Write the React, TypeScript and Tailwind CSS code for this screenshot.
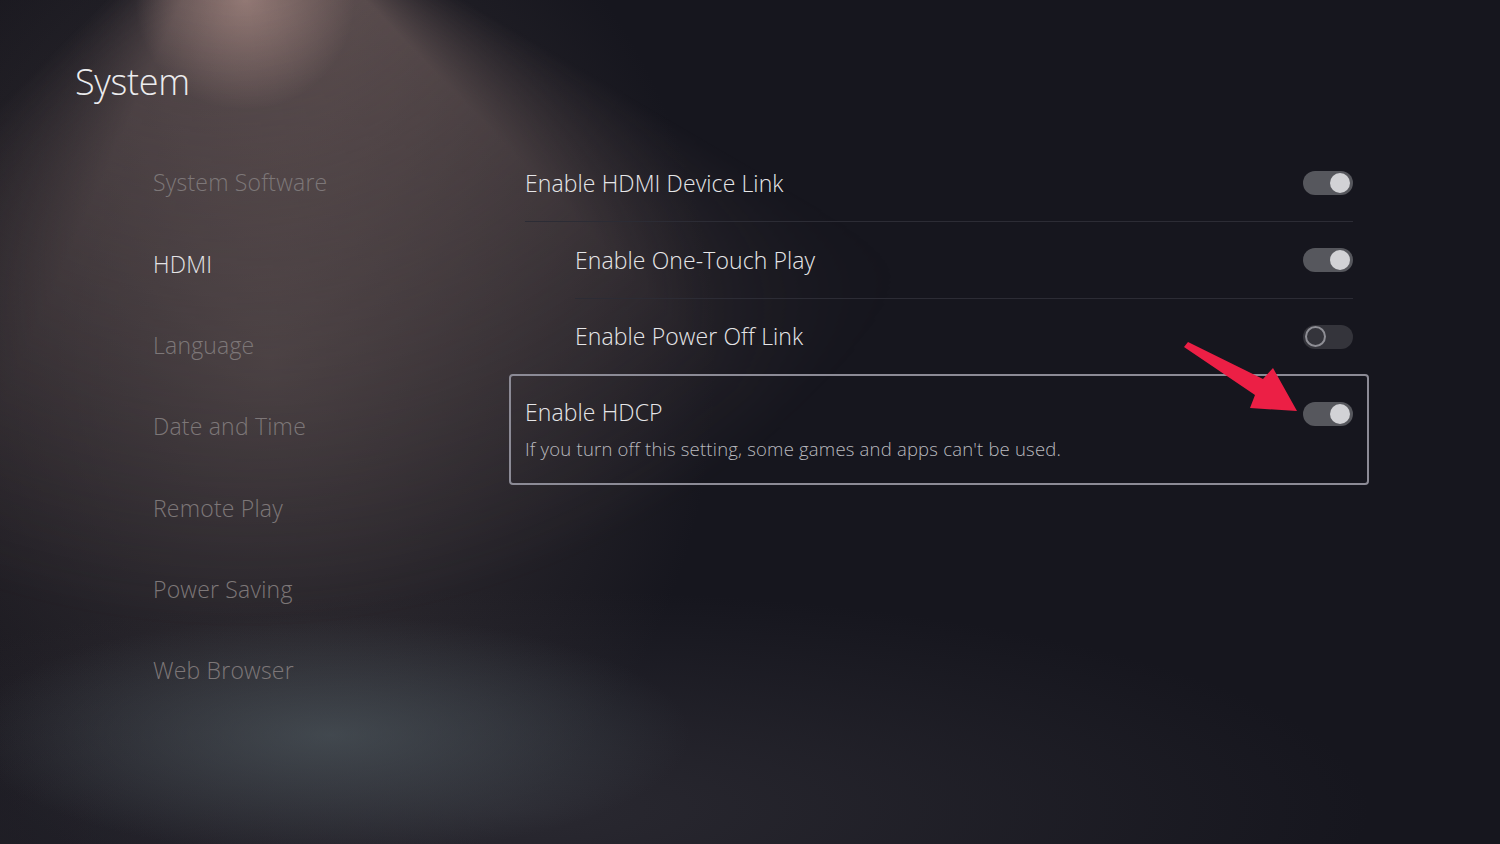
import React from "react";

const font = { fontFamily: '"Open Sans", "Noto Sans", sans-serif' };

function Toggle({ on }: { on: boolean }) {
  if (on) {
    return (
      <div className="flex h-[24px] w-[50px] shrink-0 items-center justify-end rounded-full bg-[#56575d] pr-[3px]">
        <div className="h-[20px] w-[20px] rounded-full bg-[#d2d2d6]" />
      </div>
    );
  }
  return (
    <div className="flex h-[24px] w-[50px] shrink-0 items-center justify-start rounded-full bg-[#34343b] pl-[2px]">
      <div className="h-[21px] w-[21px] rounded-full border-2 border-[#8e8e95]" />
    </div>
  );
}

const nav = [
  "System Software",
  "HDMI",
  "Language",
  "Date and Time",
  "Remote Play",
  "Power Saving",
  "Web Browser",
];

export default function App() {
  return (
    <div
      style={font}
      className="relative h-[844px] w-[1500px] overflow-hidden bg-[#16161e] bg-[radial-gradient(ellipse_110px_110px_at_245px_0px,rgba(210,170,160,0.6),transparent),radial-gradient(ellipse_360px_120px_at_330px_735px,rgba(82,94,100,0.6),transparent),radial-gradient(ellipse_850px_220px_at_520px_810px,rgba(58,56,64,0.55),transparent),radial-gradient(ellipse_620px_760px_at_270px_360px,rgba(72,64,66,0.7),transparent_72%),linear-gradient(to_right,rgba(24,23,30,0.85),transparent_9%)] text-[#e6e6e8]"
    >
      <div className="pointer-events-none absolute inset-0 bg-[conic-gradient(from_120deg_at_240px_-130px,transparent_0deg,rgba(160,132,126,0.5)_16deg,rgba(150,124,120,0.45)_84deg,transparent_106deg)] [mask-image:radial-gradient(ellipse_1000px_950px_at_240px_-130px,black_10%,transparent_80%)]" />

      <div className="relative">
        <header className="h-[142px] pl-[75px] pt-[61px]">
          <h1 className="text-[36px] font-light leading-[42px] tracking-[-0.3px] text-[#ececee]">
            System
          </h1>
        </header>

        <div className="flex">
          <nav className="w-[509px] shrink-0 pl-[153px]">
            {nav.map((item) => (
              <div
                key={item}
                className={
                  item === "HDMI"
                    ? "flex h-[81.3px] items-center text-[23px] font-light tracking-[0.2px] text-[#e4e4e6]"
                    : "flex h-[81.3px] items-center text-[23px] font-light tracking-[0.2px] text-[#7d7778]"
                }
              >
                {item}
              </div>
            ))}
          </nav>

          <section className="w-[860px] pt-[3px]">
            <div className="mx-[16px] flex h-[77px] items-center justify-between border-b border-[#2c2c35]">
              <span className="text-[23px] font-light tracking-[0.1px]">Enable HDMI Device Link</span>
              <Toggle on />
            </div>
            <div className="ml-[66px] mr-[16px] flex h-[77px] items-center justify-between border-b border-[#2c2c35]">
              <span className="text-[23px] font-light tracking-[0.1px]">Enable One-Touch Play</span>
              <Toggle on />
            </div>
            <div className="ml-[66px] mr-[16px] flex h-[75px] items-center justify-between">
              <span className="text-[23px] font-light tracking-[0.1px]">Enable Power Off Link</span>
              <Toggle on={false} />
            </div>
            <div className="flex h-[111px] justify-between rounded-[4px] border-2 border-[#8c8b96] px-[14px] pt-[20px]">
              <div className="flex flex-col">
                <span className="text-[23px] font-light leading-[32px] tracking-[0.1px]">Enable HDCP</span>
                <span className="mt-[8px] text-[18.5px] font-light leading-[26px] tracking-[0.2px] text-[#b9b9be]">
                  If you turn off this setting, some games and apps can't be used.
                </span>
              </div>
              <div className="pt-[6px]">
                <Toggle on />
              </div>
            </div>
          </section>
        </div>
      </div>

      <svg
        className="pointer-events-none absolute left-0 top-0"
        width="1500"
        height="844"
        viewBox="0 0 1500 844"
      >
        <polygon
          points="1188,342 1263,379 1273,368 1297,411 1250,408 1255,395 1184,347"
          fill="#ec1f45"
        />
      </svg>
    </div>
  );
}
